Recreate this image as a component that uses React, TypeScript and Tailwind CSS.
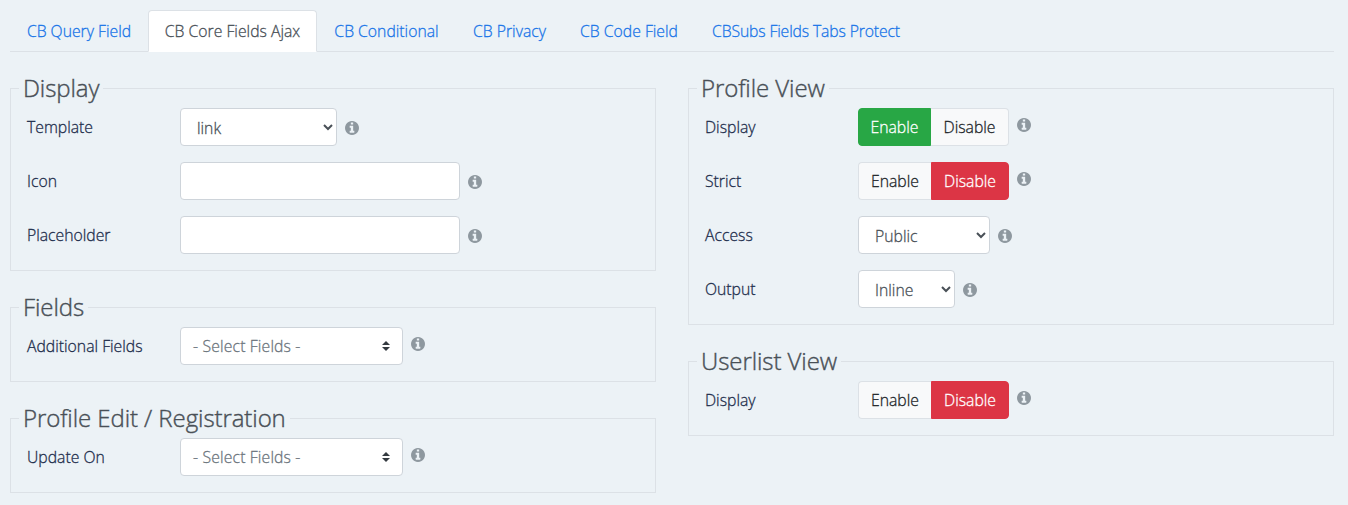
import type { ReactNode } from "react";

const tabs = [
  { label: "CB Query Field", width: "w-[138px]" },
  { label: "CB Core Fields Ajax", width: "w-[169px]", active: true },
  { label: "CB Conditional", width: "w-[139px]" },
  { label: "CB Privacy", width: "w-[107px]" },
  { label: "CB Code Field", width: "w-[132px]" },
  { label: "CBSubs Fields Tabs Protect", width: "w-[222px] tracking-[-0.14px]" },
];

function InfoIcon({ className }: { className: string }) {
  return (
    <svg viewBox="128 128 1536 1536" className={className} fill="currentColor">
      <path d="M1152 1376v-160q0-14-9-23t-23-9h-96v-512q0-14-9-23t-23-9h-320q-14 0-23 9t-9 23v160q0 14 9 23t23 9h96v320h-96q-14 0-23 9t-9 23v160q0 14 9 23t23 9h448q14 0 23-9t9-23zm-128-896v-160q0-14-9-23t-23-9h-192q-14 0-23 9t-9 23v160q0 14 9 23t23 9h192q14 0 23-9t9-23zm640 416q0 209-103 385.500t-279.500 279.500-385.500 103-385.500-103-279.500-279.500-103-385.500 103-385.500 279.500-279.500 385.500-103 385.500 103 279.500 279.500 103 385.500z" />
    </svg>
  );
}

function Panel({ title, children }: { title: string; children: ReactNode }) {
  return (
    <fieldset className="min-w-0 border border-[#dce1e6] px-2 pt-0.5">
      <legend className="h-9 px-1 text-2xl leading-[35px] tracking-[-0.08px] whitespace-nowrap text-[#495057] [-webkit-text-stroke:0.4px]">
        {title}
      </legend>
      {children}
    </fieldset>
  );
}

function Row({ label, raised, children }: { label: string; raised?: boolean; children: ReactNode }) {
  return (
    <div className="mb-4 flex h-[38px] items-center px-2">
      <div className="w-[153px] shrink-0 text-[#1f2f4d]">{label}</div>
      {children}
      <InfoIcon className={`ml-2 size-3.5 shrink-0 text-[#8e989f] ${raised ? "mb-1" : "mt-0.5"}`} />
    </div>
  );
}

function NativeSelect({ value, width }: { value: string; width: string }) {
  return (
    <select className={`h-[38px] rounded border border-[#ced4da] bg-white px-3 pt-[7px] pb-[5px] text-[#495057] ${width}`}>
      <option>{value}</option>
    </select>
  );
}

function TextInput() {
  return <input type="text" className="h-[38px] w-[280px] rounded border border-[#ced4da] bg-white px-3" />;
}

function FieldPicker() {
  return (
    <button className="flex h-[38px] w-[223px] items-center justify-between rounded border border-[#ced4da] bg-white px-3 text-[#6c757d]">
      <span className="tracking-[0.15px]">- Select Fields -</span>
      <svg viewBox="0 0 8 10" className="h-2.5 w-2" fill="#343a40">
        <path d="M4 0 8 4H0zM4 10 0 6h8z" />
      </svg>
    </button>
  );
}

function Toggle({ on }: { on?: boolean }) {
  return (
    <div className="flex h-[38px]">
      <button
        className={`w-[73px] rounded-l border ${on ? "border-[#28a745] bg-[#28a745] text-white" : "border-r-0 border-[#dce1e6] bg-[#f8f9fa] text-[#212529]"}`}
      >
        Enable
      </button>
      <button
        className={`w-[78px] rounded-r border ${on ? "border-l-0 border-[#dce1e6] bg-[#f8f9fa] text-[#212529]" : "border-[#dc3545] bg-[#dc3545] text-white"}`}
      >
        Disable
      </button>
    </div>
  );
}

export default function App() {
  return (
    <main className="h-[505px] w-[1348px] overflow-hidden bg-[#ecf2f6] px-2.5 pt-2.5 font-['Open_Sans',sans-serif] text-[15.75px] leading-6 font-light [-webkit-text-stroke:0.3px]">
      <nav className="flex h-[42px] w-[1324px] border-b border-[#dce1e6]">
        {tabs.map((tab) => (
          <a
            key={tab.label}
            className={`flex h-[42px] items-center justify-center rounded-t border whitespace-nowrap ${tab.width} ${
              tab.active ? "border-[#dce1e6] border-b-white bg-white text-[#495057]" : "border-transparent text-[#1a75e8]"
            }`}
          >
            {tab.label}
          </a>
        ))}
      </nav>
      <div className="grid w-[1324px] grid-cols-2 items-start gap-x-8 pt-[18px]">
        <div className="flex flex-col gap-[18px]">
          <Panel title="Display">
            <Row label="Template">
              <NativeSelect value="link" width="w-[157px]" />
            </Row>
            <Row label="Icon">
              <TextInput />
            </Row>
            <Row label="Placeholder">
              <TextInput />
            </Row>
          </Panel>
          <Panel title="Fields">
            <Row label="Additional Fields" raised>
              <FieldPicker />
            </Row>
          </Panel>
          <Panel title="Profile Edit / Registration">
            <Row label="Update On" raised>
              <FieldPicker />
            </Row>
          </Panel>
        </div>
        <div className="flex flex-col gap-[18px]">
          <Panel title="Profile View">
            <Row label="Display" raised>
              <Toggle on />
            </Row>
            <Row label="Strict" raised>
              <Toggle />
            </Row>
            <Row label="Access">
              <NativeSelect value="Public" width="w-[132px]" />
            </Row>
            <Row label="Output">
              <NativeSelect value="Inline" width="w-[97px]" />
            </Row>
          </Panel>
          <Panel title="Userlist View">
            <Row label="Display" raised>
              <Toggle />
            </Row>
          </Panel>
        </div>
      </div>
    </main>
  );
}
